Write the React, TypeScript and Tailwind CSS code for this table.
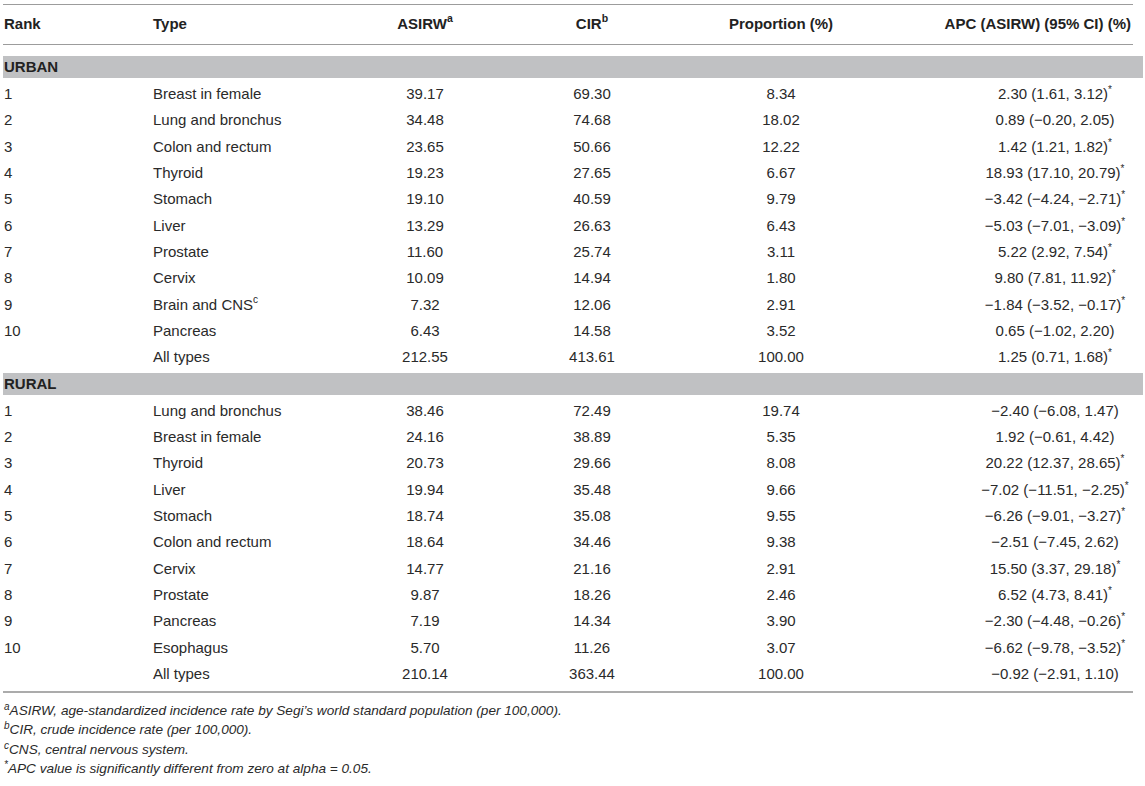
import React from "react";

type Row = [string, React.ReactNode, string, string, string, string, boolean];

const urban: Row[] = [
  ["1", "Breast in female", "39.17", "69.30", "8.34", "2.30 (1.61, 3.12)", true],
  ["2", "Lung and bronchus", "34.48", "74.68", "18.02", "0.89 (−0.20, 2.05)", false],
  ["3", "Colon and rectum", "23.65", "50.66", "12.22", "1.42 (1.21, 1.82)", true],
  ["4", "Thyroid", "19.23", "27.65", "6.67", "18.93 (17.10, 20.79)", true],
  ["5", "Stomach", "19.10", "40.59", "9.79", "−3.42 (−4.24, −2.71)", true],
  ["6", "Liver", "13.29", "26.63", "6.43", "−5.03 (−7.01, −3.09)", true],
  ["7", "Prostate", "11.60", "25.74", "3.11", "5.22 (2.92, 7.54)", true],
  ["8", "Cervix", "10.09", "14.94", "1.80", "9.80 (7.81, 11.92)", true],
  [
    "9",
    <>
      Brain and CNS<sup className="text-[10px] top-[-0.7em]">c</sup>
    </>,
    "7.32",
    "12.06",
    "2.91",
    "−1.84 (−3.52, −0.17)",
    true,
  ],
  ["10", "Pancreas", "6.43", "14.58", "3.52", "0.65 (−1.02, 2.20)", false],
  ["", "All types", "212.55", "413.61", "100.00", "1.25 (0.71, 1.68)", true],
];

const rural: Row[] = [
  ["1", "Lung and bronchus", "38.46", "72.49", "19.74", "−2.40 (−6.08, 1.47)", false],
  ["2", "Breast in female", "24.16", "38.89", "5.35", "1.92 (−0.61, 4.42)", false],
  ["3", "Thyroid", "20.73", "29.66", "8.08", "20.22 (12.37, 28.65)", true],
  ["4", "Liver", "19.94", "35.48", "9.66", "−7.02 (−11.51, −2.25)", true],
  ["5", "Stomach", "18.74", "35.08", "9.55", "−6.26 (−9.01, −3.27)", true],
  ["6", "Colon and rectum", "18.64", "34.46", "9.38", "−2.51 (−7.45, 2.62)", false],
  ["7", "Cervix", "14.77", "21.16", "2.91", "15.50 (3.37, 29.18)", true],
  ["8", "Prostate", "9.87", "18.26", "2.46", "6.52 (4.73, 8.41)", true],
  ["9", "Pancreas", "7.19", "14.34", "3.90", "−2.30 (−4.48, −0.26)", true],
  ["10", "Esophagus", "5.70", "11.26", "3.07", "−6.62 (−9.78, −3.52)", true],
  ["", "All types", "210.14", "363.44", "100.00", "−0.92 (−2.91, 1.10)", false],
];

const grid = "grid grid-cols-[150px_182px_180px_154px_224px_249px] items-center";

function DataRow({ r }: { r: Row }) {
  return (
    <div className={`${grid} h-[26.35px] text-[15px] text-[#2a2a2a]`}>
      <div className="pl-[1px]">{r[0]}</div>
      <div>{r[1]}</div>
      <div className="text-center">{r[2]}</div>
      <div className="text-center">{r[3]}</div>
      <div className="text-center">{r[4]}</div>
      <div className="text-center pl-[75px] whitespace-nowrap">
        {r[5]}
        {r[6] ? <sup className="text-[10px] top-[-0.6em]">*</sup> : null}
      </div>
    </div>
  );
}

function Band({ label }: { label: string }) {
  return (
    <div className="h-[22px] bg-[#c0c1c3] flex items-center pl-[1px] text-[15px] font-bold text-[#222]">
      {label}
    </div>
  );
}

export default function App() {
  return (
    <div
      className="w-[1145px] h-[786px] bg-white overflow-hidden"
      style={{ fontFamily: '"Liberation Sans", Arial, sans-serif' }}
    >
      <div className="ml-[3px] w-[1140px] pt-[4px]">
        <div className="h-px bg-[#9c9c9c] mr-[10px]" />
        <div className={`${grid} h-[39px] text-[15px] font-bold text-[#222]`}>
          <div className="pl-[1px]">Rank</div>
          <div>Type</div>
          <div className="text-center">
            ASIRW<sup className="text-[10.5px] top-[-0.7em]">a</sup>
          </div>
          <div className="text-center">
            CIR<sup className="text-[10.5px] top-[-0.7em]">b</sup>
          </div>
          <div className="text-center">Proportion (%)</div>
          <div className="text-right pr-[11px] whitespace-nowrap">APC (ASIRW) (95% CI) (%)</div>
        </div>
        <div className="h-px bg-[#9c9c9c] mr-[10px]" />
        <div className="mt-[11px]">
          <Band label="URBAN" />
        </div>
        <div className="mt-[3px]">
          {urban.map((r, i) => (
            <DataRow key={i} r={r} />
          ))}
        </div>
        <div className="mt-[2px]">
          <Band label="RURAL" />
        </div>
        <div className="mt-[3px]">
          {rural.map((r, i) => (
            <DataRow key={i} r={r} />
          ))}
        </div>
        <div className="mt-[3px] h-[2px] bg-[#ababab] mr-[10px]" />
        <div className="mt-[8px] pl-[1px] text-[13.6px] italic text-[#2a2a2a] leading-[19.5px]">
          <div>
            <sup className="text-[10px] top-[-0.5em]">a</sup>ASIRW, age-standardized incidence rate by Segi’s world standard population (per 100,000).
          </div>
          <div>
            <sup className="text-[10px] top-[-0.5em]">b</sup>CIR, crude incidence rate (per 100,000).
          </div>
          <div>
            <sup className="text-[10px] top-[-0.5em]">c</sup>CNS, central nervous system.
          </div>
          <div>
            <sup className="text-[10px] top-[-0.5em]">*</sup>APC value is significantly different from zero at alpha = 0.05.
          </div>
        </div>
      </div>
    </div>
  );
}
